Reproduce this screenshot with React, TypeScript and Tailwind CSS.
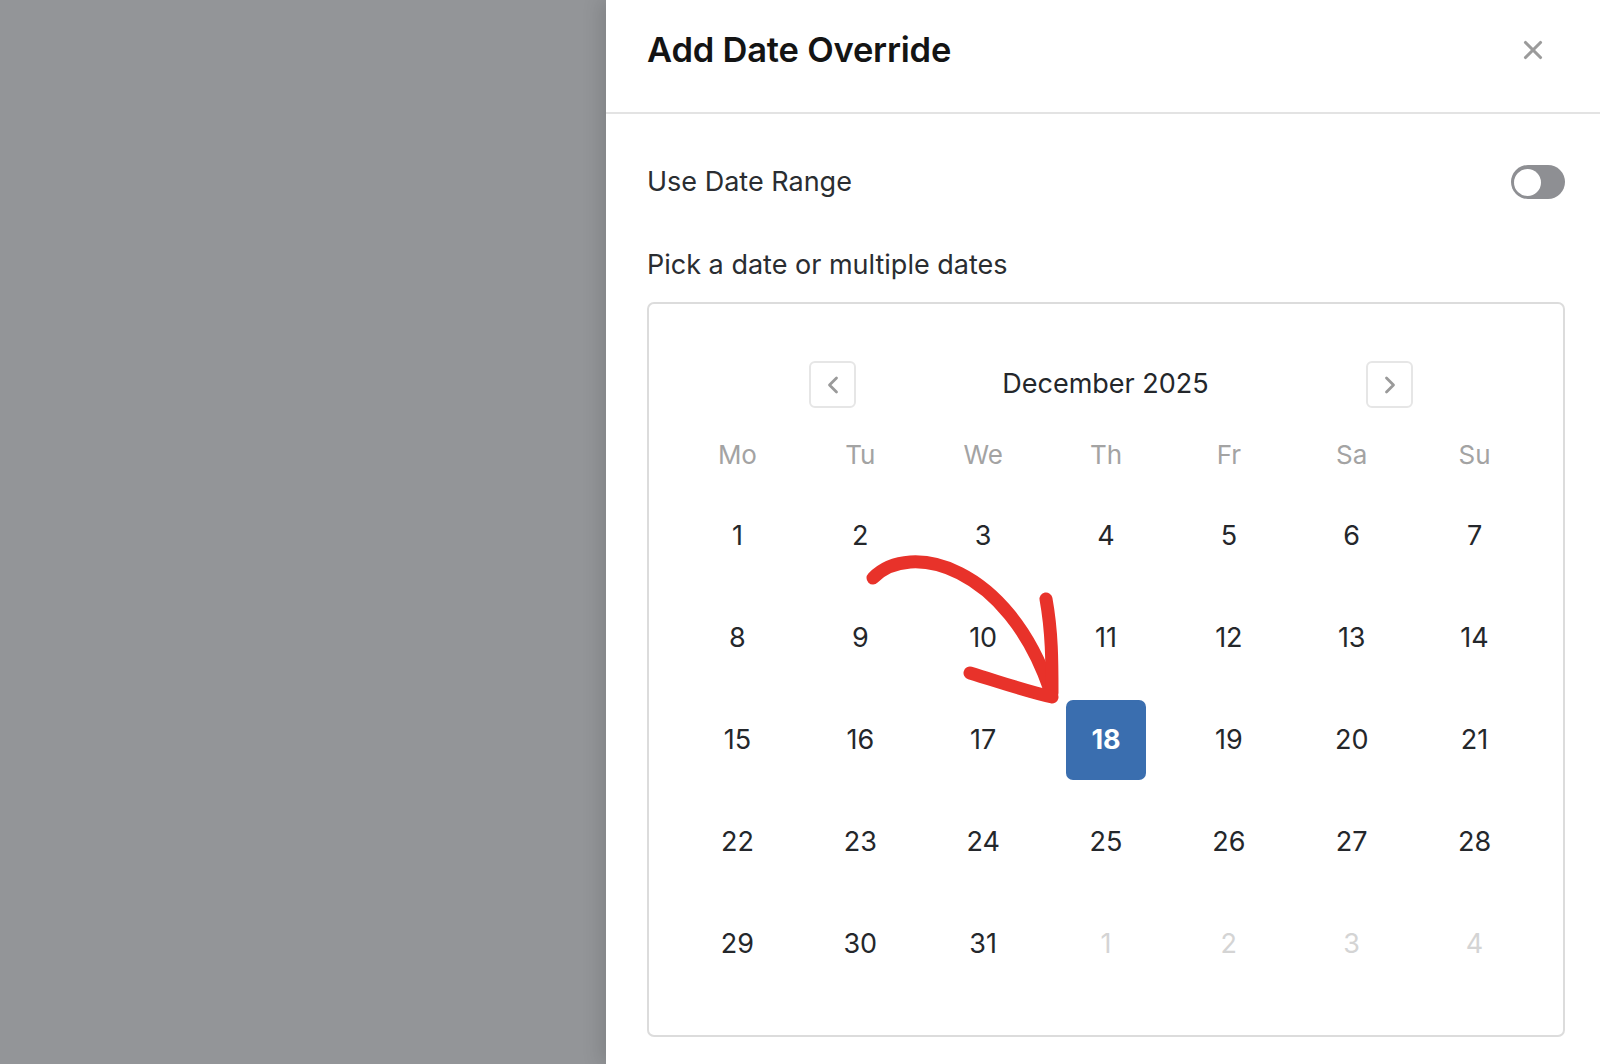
import { ChevronLeft, ChevronRight, X } from "lucide-react";

const weekdays = ["Mo", "Tu", "We", "Th", "Fr", "Sa", "Su"];

type Day = { n: number; muted?: boolean; selected?: boolean };

const days: Day[] = [
  ...Array.from({ length: 31 }, (_, i) => ({ n: i + 1, selected: i + 1 === 18 })),
  { n: 1, muted: true },
  { n: 2, muted: true },
  { n: 3, muted: true },
  { n: 4, muted: true },
];

function Toggle() {
  return (
    <div className="flex h-[34px] w-[54px] items-center rounded-full bg-[#8e8f93] px-[3px]">
      <div className="h-[27px] w-[27px] rounded-full bg-white" />
    </div>
  );
}

function Arrow() {
  return (
    <svg
      className="pointer-events-none absolute left-0 top-0"
      width="1600"
      height="1064"
      viewBox="0 0 1600 1064"
      fill="none"
    >
      <g stroke="#e8322a" strokeLinecap="round" strokeLinejoin="round">
        <path d="M873 578 C 910 540, 1008 566, 1050 690" strokeWidth="13" />
        <path d="M1046 599 C 1052 632, 1052 662, 1052 693" strokeWidth="13" />
        <path d="M970 673 C 1000 682, 1025 691, 1052 697" strokeWidth="13" />
      </g>
    </svg>
  );
}

export default function App() {
  return (
    <div
      className="relative flex h-[1064px] w-[1600px] overflow-hidden bg-[#939598]"
      style={{ fontFamily: "Inter, 'Noto Sans', sans-serif" }}
    >
      <div className="w-[606px] shrink-0" />

      {/* Side panel */}
      <div className="flex flex-1 flex-col bg-white shadow-[-6px_0_18px_rgba(0,0,0,0.12)]">
        <div className="flex h-[114px] shrink-0 items-center justify-between border-b-2 border-[#e3e3e3] pb-[12px] pl-[41px] pr-[52px]">
          <h2 className="text-[34.5px] font-semibold tracking-[-0.2px] text-[#141414]">Add Date Override</h2>
          <X className="h-[30px] w-[30px] text-[#9b9b9b]" strokeWidth={2.5} />
        </div>

        <div className="flex flex-col pl-[41px] pr-[35px]">
          <div className="mt-[48px] flex items-center justify-between">
            <span className="text-[27px] text-[#2a2d31]">Use Date Range</span>
            <Toggle />
          </div>

          <div className="mt-[42px] text-[27px] text-[#2a2d31]">Pick a date or multiple dates</div>

          {/* Calendar */}
          <div className="mt-[17px] rounded-[7px] border-2 border-[#dcdcdc] px-[27px] pb-[40px] pt-[57px]">
            <div className="flex items-center pl-[133px] pr-[123px]">
              <button className="flex h-[47px] w-[47px] items-center justify-center rounded-[6px] border-2 border-[#e6e6e6] text-[#9a9a9a]">
                <ChevronLeft className="h-[28px] w-[28px]" strokeWidth={2.4} />
              </button>
              <div className="flex-1 pr-[11px] text-center text-[27px] text-[#24272b]">December 2025</div>
              <button className="flex h-[47px] w-[47px] items-center justify-center rounded-[6px] border-2 border-[#e6e6e6] text-[#9a9a9a]">
                <ChevronRight className="h-[28px] w-[28px]" strokeWidth={2.4} />
              </button>
            </div>

            <div className="mt-[26px] grid grid-cols-7">
              {weekdays.map((w) => (
                <div key={w} className="flex h-[40px] items-center justify-center text-[26px] text-[#a3a3a3]">
                  {w}
                </div>
              ))}
            </div>

            <div className="mt-[11px] grid grid-cols-7">
              {days.map((d, i) => (
                <div key={i} className="flex h-[102px] items-center justify-center">
                  {d.selected ? (
                    <div className="flex h-[80px] w-[80px] items-center justify-center rounded-[7px] bg-[#3a6eaf] text-[27px] font-bold text-white">
                      {d.n}
                    </div>
                  ) : (
                    <span className={`text-[27px] ${d.muted ? "text-[#d4d4d4]" : "text-[#24272b]"}`}>{d.n}</span>
                  )}
                </div>
              ))}
            </div>
          </div>
        </div>
      </div>

      <Arrow />
    </div>
  );
}
